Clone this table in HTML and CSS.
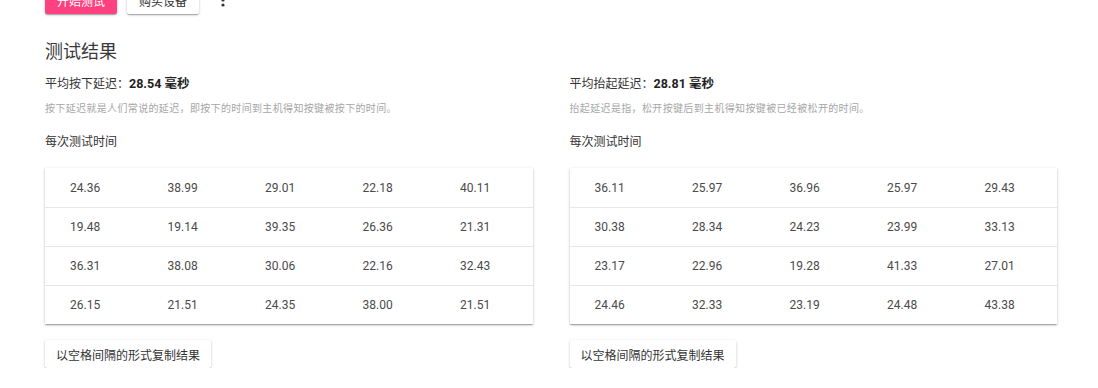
FILE: index.html
```html
<!DOCTYPE html>
<html lang="zh-CN">
<head>
<meta charset="utf-8">
<title>测试结果</title>
<link rel="stylesheet" href="styles.css">
</head>
<body>
<div class="page">
  <div class="toolbar">
    <button class="btn btn-primary">开始测试</button>
    <button class="btn">购买设备</button>
    <button class="icon-btn" aria-label="更多">
      <svg width="24" height="24" viewBox="0 0 24 24"><circle cx="12" cy="7" r="1.6" fill="#333"/><circle cx="12" cy="12" r="1.6" fill="#333"/><circle cx="12" cy="17" r="1.6" fill="#333"/></svg>
    </button>
  </div>

  <h2 class="title">测试结果</h2>

  <div class="columns">
    <section class="col">
      <div class="avg">平均按下延迟：<b>28.54 毫秒</b></div>
      <div class="desc">按下延迟就是人们常说的延迟，即按下的时间到主机得知按键被按下的时间。</div>
      <div class="sub">每次测试时间</div>
      <div class="card">
        <div class="row"><span>24.36</span><span>38.99</span><span>29.01</span><span>22.18</span><span>40.11</span></div>
        <div class="row"><span>19.48</span><span>19.14</span><span>39.35</span><span>26.36</span><span>21.31</span></div>
        <div class="row"><span>36.31</span><span>38.08</span><span>30.06</span><span>22.16</span><span>32.43</span></div>
        <div class="row"><span>26.15</span><span>21.51</span><span>24.35</span><span>38.00</span><span>21.51</span></div>
      </div>
      <button class="btn copy">以空格间隔的形式复制结果</button>
    </section>

    <section class="col">
      <div class="avg">平均抬起延迟：<b>28.81 毫秒</b></div>
      <div class="desc">抬起延迟是指，松开按键后到主机得知按键被已经被松开的时间。</div>
      <div class="sub">每次测试时间</div>
      <div class="card">
        <div class="row"><span>36.11</span><span>25.97</span><span>36.96</span><span>25.97</span><span>29.43</span></div>
        <div class="row"><span>30.38</span><span>28.34</span><span>24.23</span><span>23.99</span><span>33.13</span></div>
        <div class="row"><span>23.17</span><span>22.96</span><span>19.28</span><span>41.33</span><span>27.01</span></div>
        <div class="row"><span>24.46</span><span>32.33</span><span>23.19</span><span>24.48</span><span>43.38</span></div>
      </div>
      <button class="btn copy">以空格间隔的形式复制结果</button>
    </section>
  </div>
</div>
</body>
</html>
```
FILE: styles.css
```css
html, body {
  margin: 0;
  padding: 0;
  background: #fff;
}
body {
  font-family: "Roboto", "Noto Sans CJK SC", sans-serif;
  color: #333;
  overflow: hidden;
}
.page {
  margin-top: -14px;
  padding: 0 41px 0 45px;
}
.toolbar {
  display: flex;
  align-items: center;
  gap: 10px;
  height: 28px;
}
.btn {
  font-family: "Roboto", "Noto Sans CJK SC", sans-serif;
  font-size: 12px;
  height: 28px;
  padding: 0 12px;
  border: none;
  border-radius: 2px;
  background: #fff;
  color: #333;
  box-shadow: 0 1px 3px rgba(0,0,0,0.2), 0 1px 1px rgba(0,0,0,0.14), 0 2px 1px -1px rgba(0,0,0,0.12);
  cursor: pointer;
}
.btn-primary {
  background: #ff4081;
  color: #fff;
}
.icon-btn {
  border: none;
  background: none;
  padding: 0;
  margin-left: 2px;
  width: 24px;
  height: 24px;
  display: flex;
}
.title {
  margin: 26px 0 0;
  font-size: 18px;
  font-weight: 400;
  line-height: 24px;
  color: #3a3a3a;
}
.columns {
  display: grid;
  grid-template-columns: 1fr 1fr;
  column-gap: 37px;
  margin-top: 11px;
}
.avg {
  font-size: 12px;
  line-height: 18px;
  color: #333;
}
.avg b {
  font-size: 12.5px;
  font-weight: 700;
  color: #222;
}
.desc {
  margin-top: 9px;
  font-size: 10px;
  line-height: 14px;
  color: #a6a6a6;
  letter-spacing: 0.35px;
}
.sub {
  margin-top: 17px;
  font-size: 12px;
  line-height: 18px;
  color: #333;
}
.card {
  margin-top: 17px;
  background: #fff;
  box-shadow: 0 1px 3px rgba(0,0,0,0.2), 0 1px 1px rgba(0,0,0,0.14), 0 2px 1px -1px rgba(0,0,0,0.12);
}
.row {
  display: grid;
  grid-template-columns: repeat(5, 1fr);
  align-items: center;
  height: 39px;
  box-sizing: border-box;
  border-top: 1px solid #e6e6e6;
  font-size: 12px;
  color: #4a4a4a;
}
.row:first-child {
  border-top: none;
}
.row span {
  padding-left: 25px;
}
.copy {
  display: block;
  margin-top: 16px;
  padding: 0 11px;
}
```
